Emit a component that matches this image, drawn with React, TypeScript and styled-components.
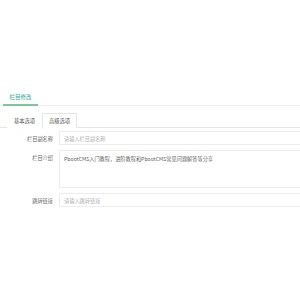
import React from "react";
import styled, { createGlobalStyle } from "styled-components";

const Global = createGlobalStyle`
  html, body { margin: 0; padding: 0; background: #fff; }
  body { font-family: "Noto Sans CJK SC", "Noto Sans", sans-serif; overflow: hidden; width: 300px; height: 300px; }
  #root { width: 300px; overflow: hidden; }
`;

const Page = styled.div`
  padding-top: 89px;
`;

const TitleBar = styled.div`
  display: flex;
  border-bottom: 1px solid #f0f0f0;
  padding-left: 3px;
`;

const TitleTab = styled.div`
  width: 35px;
  height: 15px;
  display: flex;
  align-items: center;
  justify-content: center;
  font-size: 5.5px;
  color: #2fa88c;
  border-bottom: 2px solid #7cc79a;
  margin-bottom: -1px;
`;

const Body = styled.div`
  padding-top: 7px;
`;

const TabList = styled.div`
  display: flex;
  padding-left: 7px;
  border-bottom: 1px solid #e6e6e6;
`;

const Tab = styled.div<{ $active?: boolean }>`
  width: 35px;
  height: 15px;
  display: flex;
  align-items: center;
  justify-content: center;
  font-size: 5.3px;
  color: #555;
  box-sizing: border-box;
  border: 1px solid ${(p) => (p.$active ? "#e6e6e6" : "transparent")};
  border-bottom: 1px solid ${(p) => (p.$active ? "#fff" : "transparent")};
  margin-bottom: -1px;
  background: #fff;
`;

const Form = styled.div`
  display: flex;
  flex-direction: column;
  gap: 5px;
  padding-top: 3px;
`;

const Row = styled.div`
  display: grid;
  grid-template-columns: 53px 330px;
  column-gap: 6px;
  align-items: start;
`;

const Label = styled.div<{ $h: number }>`
  height: ${(p) => p.$h}px;
  display: flex;
  align-items: center;
  justify-content: flex-end;
  font-size: 5.2px;
  color: #666;
  white-space: nowrap;
`;

const Field = styled.div<{ $h: number; $top?: boolean }>`
  box-sizing: border-box;
  height: ${(p) => p.$h}px;
  border: 1px solid #ededed;
  padding: ${(p) => (p.$top ? "4px" : "0")} 4px 0;
  display: flex;
  align-items: ${(p) => (p.$top ? "flex-start" : "center")};
  font-size: 5.2px;
  white-space: nowrap;
`;

const Placeholder = styled.span`
  color: #b0b0b0;
`;

const Value = styled.span`
  color: #666;
`;

export default function App() {
  return (
    <Page>
      <Global />
      <TitleBar>
        <TitleTab>栏目修改</TitleTab>
      </TitleBar>
      <Body>
        <TabList>
          <Tab>基本选项</Tab>
          <Tab $active>高级选项</Tab>
        </TabList>
        <Form>
          <Row>
            <Label $h={14}>栏目副名称</Label>
            <Field $h={14}>
              <Placeholder>请输入栏目副名称</Placeholder>
            </Field>
          </Row>
          <Row>
            <Label $h={14}>栏目介绍</Label>
            <Field $h={38} $top>
              <Value>PbootCMS入门教程，进阶教程和PbootCMS常见问题解答等分享</Value>
            </Field>
          </Row>
          <Row>
            <Label $h={14}>跳转链接</Label>
            <Field $h={14}>
              <Placeholder>请输入跳转链接</Placeholder>
            </Field>
          </Row>
        </Form>
      </Body>
    </Page>
  );
}
